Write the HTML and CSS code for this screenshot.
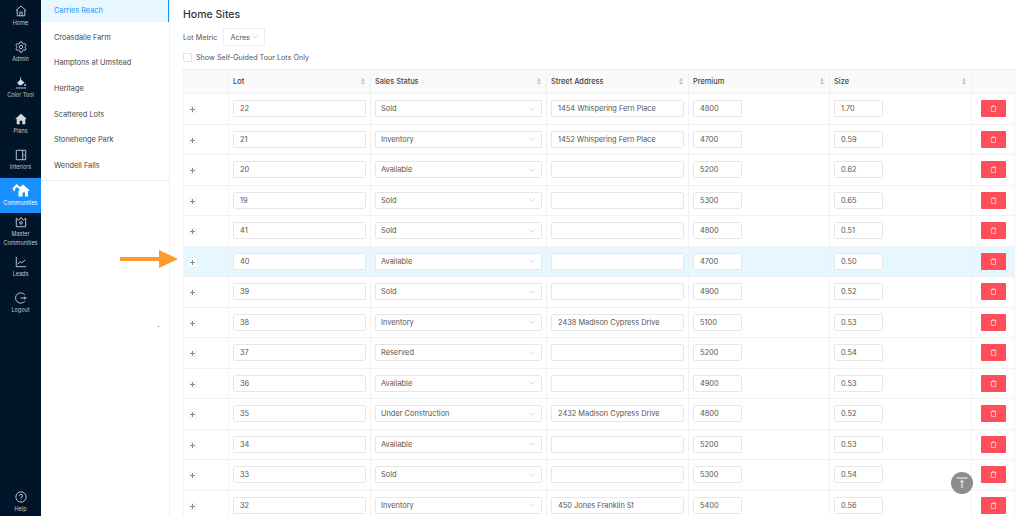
FILE: index.html
```html
<!DOCTYPE html>
<html lang="en">
<head>
<meta charset="utf-8">
<title>Home Sites</title>
<link rel="stylesheet" href="styles.css">
</head>
<body>
<div class="app">
  <nav class="rail">
    <a class="rail-item"><svg class="ri" viewBox="0 0 14 14"><path d="M1 6.600 7 1.200l6 5.400M2.600 5.600v7h8.800v-7M5.600 12.600V8.400h2.800v4.200"/></svg><span>Home</span></a>
    <a class="rail-item"><svg class="ri" viewBox="0 0 14 14"><path d="M5.800 1h2.400l.4 1.800 1.500.8 1.700-.6 1.200 2.100-1.300 1.200v1.400l1.300 1.200-1.200 2.100-1.700-.6-1.500.8L8.200 13H5.800l-.4-1.800-1.500-.8-1.700.6-1.200-2.100 1.300-1.200V6.300L1 5.100l1.200-2.100 1.700.6 1.500-.8z"/><circle cx="7" cy="7" r="2"/></svg><span>Admin</span></a>
    <a class="rail-item"><svg class="ri" viewBox="0 0 14 14"><path class="solid" d="M6.500 2.500 11 6.300 7.500 9.500H5L2.500 7z"/><path d="M6.500 .5v3"/><path class="solid" d="M11.800 7.500c.7 1 1 1.500 1 2a1 1 0 0 1-2 0c0-.5.3-1 1-2z"/><path d="M1 12.800h12"/></svg><span>Color Tool</span></a>
    <a class="rail-item"><svg class="ri" viewBox="0 0 14 14"><path class="solid" d="M7 .8 13.800 7H12v6H8.500V9h-3v4H2V7H.2z"/></svg><span>Plans</span></a>
    <a class="rail-item"><svg class="ri" viewBox="0 0 14 14"><path d="M1.500 1.500h11v11h-11zM9 1.500v11M10.600 6.400v1.400"/></svg><span>Interiors</span></a>
    <a class="rail-item active"><svg class="ri" viewBox="0 0 18 14"><path class="solid" d="M4.500 1 8 4 11 1.500l7 6.300h-2v5.700h-3V9.500h-2.500v4H6.500V8L8 6.700 5 4 3 5.800V8H1.500V6H0z"/></svg><span>Communities</span></a>
    <a class="rail-item master"><svg class="ri" viewBox="0 0 14 14"><path d="M1.500 2.500 4.500 5 7 1.500 9.500 5l3-2.500v10h-11z"/><circle cx="7" cy="8" r="1.500"/></svg><span>Master<br>Communities</span></a>
    <a class="rail-item"><svg class="ri" viewBox="0 0 14 14"><path d="M1.500 1v11.500H13M3.500 9.500 6 6.500l2 1.500 4-3.500"/></svg><span>Leads</span></a>
    <a class="rail-item"><svg class="ri" viewBox="0 0 14 14"><path d="M11.500 3.500a6 6 0 1 0 0 7M6.500 7h7M11.500 5.500v3"/></svg><span>Logout</span></a>
    <a class="rail-item help"><svg class="ri" viewBox="0 0 14 14"><circle cx="7" cy="7" r="6"/><path d="M5.200 5.500A1.800 1.800 0 1 1 7 7.500v1.200M7 10v.8"/></svg><span>Help</span></a>
  </nav>

  <aside class="sub">
    <div class="sub-list">
      <a class="sub-item current">Carries Reach</a>
      <a class="sub-item">Croasdaile Farm</a>
      <a class="sub-item">Hamptons at Umstead</a>
      <a class="sub-item">Heritage</a>
      <a class="sub-item">Scattered Lots</a>
      <a class="sub-item">Stonehenge Park</a>
      <a class="sub-item">Wendell Falls</a>
    </div>
  </aside>

  <main class="main">
    <h1 class="title">Home Sites</h1>
    <div class="metric">
      <span>Lot Metric</span>
      <span class="metric-select">Acres <svg class="chev" viewBox="0 0 10 6"><path d="M.5.500 5 5 9.500.500"/></svg></span>
    </div>
    <label class="self"><span class="box"></span>Show Self-Guided Tour Lots Only</label>

    <table class="grid">
      <colgroup>
        <col class="c-x"><col class="c-lot"><col class="c-status"><col class="c-addr"><col class="c-prem"><col class="c-size"><col class="c-del">
      </colgroup>
      <thead>
        <tr>
          <th></th>
          <th><div class="th">Lot<i class="sort"></i></div></th>
          <th><div class="th">Sales Status<i class="sort"></i></div></th>
          <th><div class="th">Street Address<i class="sort"></i></div></th>
          <th><div class="th">Premium<i class="sort"></i></div></th>
          <th><div class="th">Size<i class="sort"></i></div></th>
          <th></th>
        </tr>
      </thead>
      <tbody>
        <tr><td><span class="plus"></span></td><td><div class="in">22</div></td><td><div class="in sel">Sold<svg class="chev" viewBox="0 0 10 6"><path d="M.5.500 5 5 9.500.500"/></svg></div></td><td><div class="in">1454 Whispering Fern Place</div></td><td><div class="in num">4800</div></td><td><div class="in num">1.70</div></td><td><span class="del"><svg viewBox="0 0 10 10"><path d="M1 2.200h8M3.500 2V1h3v1M2 2.200v7h6v-7"/></svg></span></td></tr>
        <tr><td><span class="plus"></span></td><td><div class="in">21</div></td><td><div class="in sel">Inventory<svg class="chev" viewBox="0 0 10 6"><path d="M.5.500 5 5 9.500.500"/></svg></div></td><td><div class="in">1452 Whispering Fern Place</div></td><td><div class="in num">4700</div></td><td><div class="in num">0.59</div></td><td><span class="del"><svg viewBox="0 0 10 10"><path d="M1 2.200h8M3.500 2V1h3v1M2 2.200v7h6v-7"/></svg></span></td></tr>
        <tr><td><span class="plus"></span></td><td><div class="in">20</div></td><td><div class="in sel">Available<svg class="chev" viewBox="0 0 10 6"><path d="M.5.500 5 5 9.500.500"/></svg></div></td><td><div class="in"></div></td><td><div class="in num">5200</div></td><td><div class="in num">0.62</div></td><td><span class="del"><svg viewBox="0 0 10 10"><path d="M1 2.200h8M3.500 2V1h3v1M2 2.200v7h6v-7"/></svg></span></td></tr>
        <tr><td><span class="plus"></span></td><td><div class="in">19</div></td><td><div class="in sel">Sold<svg class="chev" viewBox="0 0 10 6"><path d="M.5.500 5 5 9.500.500"/></svg></div></td><td><div class="in"></div></td><td><div class="in num">5300</div></td><td><div class="in num">0.65</div></td><td><span class="del"><svg viewBox="0 0 10 10"><path d="M1 2.200h8M3.500 2V1h3v1M2 2.200v7h6v-7"/></svg></span></td></tr>
        <tr><td><span class="plus"></span></td><td><div class="in">41</div></td><td><div class="in sel">Sold<svg class="chev" viewBox="0 0 10 6"><path d="M.5.500 5 5 9.500.500"/></svg></div></td><td><div class="in"></div></td><td><div class="in num">4800</div></td><td><div class="in num">0.51</div></td><td><span class="del"><svg viewBox="0 0 10 10"><path d="M1 2.200h8M3.500 2V1h3v1M2 2.200v7h6v-7"/></svg></span></td></tr>
        <tr class="hl"><td><span class="plus"></span></td><td><div class="in">40</div></td><td><div class="in sel">Available<svg class="chev" viewBox="0 0 10 6"><path d="M.5.500 5 5 9.500.500"/></svg></div></td><td><div class="in"></div></td><td><div class="in num">4700</div></td><td><div class="in num">0.50</div></td><td><span class="del"><svg viewBox="0 0 10 10"><path d="M1 2.200h8M3.500 2V1h3v1M2 2.200v7h6v-7"/></svg></span></td></tr>
        <tr><td><span class="plus"></span></td><td><div class="in">39</div></td><td><div class="in sel">Sold<svg class="chev" viewBox="0 0 10 6"><path d="M.5.500 5 5 9.500.500"/></svg></div></td><td><div class="in"></div></td><td><div class="in num">4900</div></td><td><div class="in num">0.52</div></td><td><span class="del"><svg viewBox="0 0 10 10"><path d="M1 2.200h8M3.500 2V1h3v1M2 2.200v7h6v-7"/></svg></span></td></tr>
        <tr><td><span class="plus"></span></td><td><div class="in">38</div></td><td><div class="in sel">Inventory<svg class="chev" viewBox="0 0 10 6"><path d="M.5.500 5 5 9.500.500"/></svg></div></td><td><div class="in">2438 Madison Cypress Drive</div></td><td><div class="in num">5100</div></td><td><div class="in num">0.53</div></td><td><span class="del"><svg viewBox="0 0 10 10"><path d="M1 2.200h8M3.500 2V1h3v1M2 2.200v7h6v-7"/></svg></span></td></tr>
        <tr><td><span class="plus"></span></td><td><div class="in">37</div></td><td><div class="in sel">Reserved<svg class="chev" viewBox="0 0 10 6"><path d="M.5.500 5 5 9.500.500"/></svg></div></td><td><div class="in"></div></td><td><div class="in num">5200</div></td><td><div class="in num">0.54</div></td><td><span class="del"><svg viewBox="0 0 10 10"><path d="M1 2.200h8M3.500 2V1h3v1M2 2.200v7h6v-7"/></svg></span></td></tr>
        <tr><td><span class="plus"></span></td><td><div class="in">36</div></td><td><div class="in sel">Available<svg class="chev" viewBox="0 0 10 6"><path d="M.5.500 5 5 9.500.500"/></svg></div></td><td><div class="in"></div></td><td><div class="in num">4900</div></td><td><div class="in num">0.53</div></td><td><span class="del"><svg viewBox="0 0 10 10"><path d="M1 2.200h8M3.500 2V1h3v1M2 2.200v7h6v-7"/></svg></span></td></tr>
        <tr><td><span class="plus"></span></td><td><div class="in">35</div></td><td><div class="in sel">Under Construction<svg class="chev" viewBox="0 0 10 6"><path d="M.5.500 5 5 9.500.500"/></svg></div></td><td><div class="in">2432 Madison Cypress Drive</div></td><td><div class="in num">4800</div></td><td><div class="in num">0.52</div></td><td><span class="del"><svg viewBox="0 0 10 10"><path d="M1 2.200h8M3.500 2V1h3v1M2 2.200v7h6v-7"/></svg></span></td></tr>
        <tr><td><span class="plus"></span></td><td><div class="in">34</div></td><td><div class="in sel">Available<svg class="chev" viewBox="0 0 10 6"><path d="M.5.500 5 5 9.500.500"/></svg></div></td><td><div class="in"></div></td><td><div class="in num">5200</div></td><td><div class="in num">0.53</div></td><td><span class="del"><svg viewBox="0 0 10 10"><path d="M1 2.200h8M3.500 2V1h3v1M2 2.200v7h6v-7"/></svg></span></td></tr>
        <tr><td><span class="plus"></span></td><td><div class="in">33</div></td><td><div class="in sel">Sold<svg class="chev" viewBox="0 0 10 6"><path d="M.5.500 5 5 9.500.500"/></svg></div></td><td><div class="in"></div></td><td><div class="in num">5300</div></td><td><div class="in num">0.54</div></td><td><span class="del"><svg viewBox="0 0 10 10"><path d="M1 2.200h8M3.500 2V1h3v1M2 2.200v7h6v-7"/></svg></span></td></tr>
        <tr><td><span class="plus"></span></td><td><div class="in">32</div></td><td><div class="in sel">Inventory<svg class="chev" viewBox="0 0 10 6"><path d="M.5.500 5 5 9.500.500"/></svg></div></td><td><div class="in">450 Jones Franklin St</div></td><td><div class="in num">5400</div></td><td><div class="in num">0.56</div></td><td><span class="del"><svg viewBox="0 0 10 10"><path d="M1 2.200h8M3.500 2V1h3v1M2 2.200v7h6v-7"/></svg></span></td></tr>
      </tbody>
    </table>
  </main>

  <svg class="arrow" viewBox="0 0 58 18"><path d="M0 7h39V0l19 9-19 9v-7H0z"/></svg>
  <i class="speck"></i>
  <span class="totop"><svg viewBox="0 0 12 12"><path d="M.5 1h11M6 11V3.500M4 5.500l2-2 2 2"/></svg></span>
</div>
</body>
</html>
```
FILE: styles.css
```css
* { box-sizing: border-box; }
html, body { margin: 0; height: 516px; overflow: hidden; background: #fff; }
body { font-family: Inter, "Liberation Sans", sans-serif; color: #444; font-size: 8px; }

.app { display: flex; height: 516px; overflow: hidden; position: relative; }

.rail { width: 41px; flex: none; background: #001529; display: flex; flex-direction: column; color: #c0c7ce; }
.rail-item { height: 36px; padding-top: 5px; display: flex; flex-direction: column; align-items: center; font-size: 5.500px; line-height: 8px; text-align: center; white-space: nowrap; }
.rail-item span { margin-top: 2px; }
.ri { width: 12px; height: 12px; fill: none; stroke: #d5dade; stroke-width: 1; flex: none; }
.ri .solid { fill: #d5dade; stroke: none; }
.rail-item.active { height: 35px; margin-top: -2px; background: #1890ff; color: #fff; }
.rail-item.active .ri { width: 18px; height: 14px; }
.rail-item.active .solid { fill: #fff; }
.rail-item.master { height: 38px; padding-top: 3px; }
.rail-item.master span { line-height: 9px; margin-top: 2px; }
.help { margin-top: auto; height: 30px; padding-top: 5px; }

.sub { width: 129px; flex: none; border-right: 1px solid #f0f0f0; }
.sub-list { border-bottom: 1px solid #f0f0f0; height: 181px; }
.sub-item { display: block; height: 25.700px; line-height: 23px; padding-left: 13px; font-size: 7.350px; color: #444; }
.sub-item.current { height: 22px; line-height: 22px; margin-bottom: 3.700px; background: #e6f7ff; color: #1890ff; border-right: 1px solid #1890ff; }

.main { flex: 1; padding: 0 10px 0 13px; min-width: 0; }
.title { margin: 0; padding-top: 7px; font-size: 10.500px; line-height: 16px; font-weight: 500; color: #333; }
.metric { display: flex; align-items: center; gap: 6px; margin-top: 5px; height: 18px; font-size: 7.200px; color: #555; }
.metric-select { width: 42px; height: 18px; border: 1px solid #eee; display: flex; align-items: center; justify-content: space-between; padding: 0 6px; }
.chev { width: 6px; height: 4px; fill: none; stroke: #bbb; stroke-width: .9; flex: none; }
.self { display: flex; align-items: center; gap: 4px; margin-top: 5px; height: 12px; font-size: 7.200px; color: #555; }
.box { width: 9px; height: 9px; border: 1px solid #e4e4e4; border-radius: 1px; }

.grid { border-collapse: collapse; table-layout: fixed; width: 831px; margin-top: 5.700px; border: 1px solid #f2f2f2; }
.c-x { width: 45px; } .c-lot { width: 142px; } .c-status { width: 176px; } .c-addr { width: 142px; }
.c-prem { width: 141px; } .c-size { width: 142px; } .c-del { width: 43px; }
th { height: 24.500px; background: #fafafa; border-right: 1px solid #f2f2f2; font-weight: 500; font-size: 7.400px; color: #444; text-align: left; padding: 0 5px 0 4px; }
td { height: 30.500px; border-top: 1px solid #f2f2f2; border-right: 1px solid #f2f2f2; padding: 0 4px; }
.th { display: flex; justify-content: space-between; align-items: center; }
.sort { width: 4px; height: 7px; flex: none; background: #c4c4c4; clip-path: polygon(50% 0, 100% 40%, 55% 43%, 55% 57%, 100% 60%, 50% 100%, 0 60%, 45% 57%, 45% 43%, 0 40%); }
.hl td { background: #e6f7ff; }
td:first-child { text-align: left; padding-left: 4.500px; }
.plus { display: inline-block; width: 8px; height: 8px; vertical-align: middle; border-radius: 1px; background: linear-gradient(#8a8a8a, #8a8a8a) center / 5px 1px no-repeat, linear-gradient(#8a8a8a, #8a8a8a) center / 1px 5px no-repeat, #f8f8f8; }
.hl .plus { background: linear-gradient(#8a8a8a, #8a8a8a) center / 5px 1px no-repeat, linear-gradient(#8a8a8a, #8a8a8a) center / 1px 5px no-repeat, #fff; }
.in { height: 17px; border: 1px solid #e6e6e6; border-radius: 1.500px; background: #fff; display: flex; align-items: center; padding: 0 6px; font-size: 7.400px; color: #555; white-space: nowrap; overflow: hidden; }
.sel { justify-content: space-between; padding: 0 6px 0 5px; }
.num { width: 49px; }
td:last-child { padding: 0; text-align: center; }
.del { display: inline-flex; width: 25px; height: 17px; background: #ff4d5a; border-radius: 1px; align-items: center; justify-content: center; vertical-align: middle; }
.del svg { width: 7px; height: 7px; fill: none; stroke: #fff; stroke-width: .8; }

.arrow { position: absolute; left: 120px; top: 250px; width: 58px; height: 18px; fill: #ff9a2e; }
.speck { position: absolute; left: 158px; top: 326px; width: 1px; height: 1px; background: #777; }
.totop { position: absolute; left: 951px; top: 472px; width: 22px; height: 22px; border-radius: 50%; background: #8c8c8c; display: flex; align-items: center; justify-content: center; }
.totop svg { width: 12px; height: 12px; fill: none; stroke: #fff; stroke-width: 1; }
```
